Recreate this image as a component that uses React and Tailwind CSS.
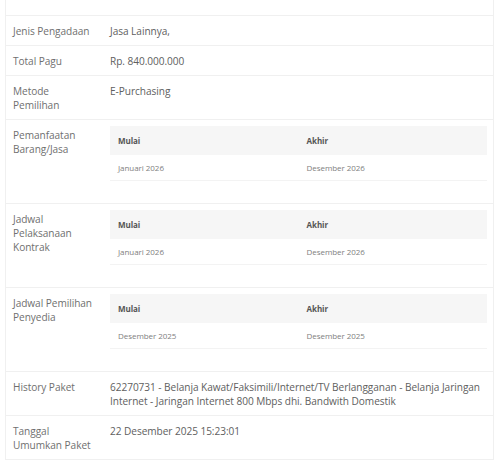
const jadwal = [
  {
    label: ["Pemanfaatan", "Barang/Jasa"],
    mulai: "Januari 2026",
    akhir: "Desember 2026",
  },
  {
    label: ["Jadwal", "Pelaksanaan", "Kontrak"],
    mulai: "Januari 2026",
    akhir: "Desember 2026",
  },
  {
    label: ["Jadwal Pemilihan", "Penyedia"],
    mulai: "Desember 2025",
    akhir: "Desember 2025",
  },
];

function Row({ label, children, valueClass = "pt-[8px] pb-[7px]" }) {
  return (
    <div className="flex border-t border-[#f0f0f0]">
      <div className="w-[96px] shrink-0 pl-[7px] pr-[4px] pt-[8px] pb-[7px] text-[#6f6f6f]">
        {label}
      </div>
      <div className={`flex-1 pl-[8px] pr-[2px] text-[#606060] ${valueClass}`}>{children}</div>
    </div>
  );
}

function JadwalTable({ mulai, akhir }) {
  return (
    <div className="mb-[22px] mr-[4px] text-[8px] leading-[12px]">
      <div className="grid grid-cols-2 bg-[#f6f6f6] h-[29px] items-center">
        <div className="pl-[8px] font-bold text-[#555]">Mulai</div>
        <div className="pl-[8px] font-bold text-[#555]">Akhir</div>
      </div>
      <div className="grid grid-cols-2 h-[26px] items-center border-b border-[#f3f3f3] text-[#808080]">
        <div className="pl-[8px]">{mulai}</div>
        <div className="pl-[8px]">{akhir}</div>
      </div>
    </div>
  );
}

export default function App() {
  return (
    <div
      className="w-[504px] h-[472px] bg-white overflow-hidden"
      style={{ fontFamily: '"Open Sans", "Liberation Sans", sans-serif' }}
    >
      <div className="mx-[5px] w-[489px] border-x border-b border-[#f0f0f0] text-[10.1px] leading-[14px] tracking-[-0.05px]">
        <div className="h-[15px]" />
        <Row label="Jenis Pengadaan">Jasa Lainnya,</Row>
        <Row label="Total Pagu">Rp. 840.000.000</Row>
        <Row label={<>Metode<br />Pemilihan</>}>E-Purchasing</Row>
        {jadwal.map((j) => (
          <Row
            key={j.label.join(" ")}
            valueClass="pt-[6px]"
            label={j.label.map((l, i) => (
              <div key={i}>{l}</div>
            ))}
          >
            <JadwalTable mulai={j.mulai} akhir={j.akhir} />
          </Row>
        ))}
        <Row label="History Paket">
          62270731 - Belanja Kawat/Faksimili/Internet/TV Berlangganan - Belanja Jaringan Internet - Jaringan Internet 800 Mbps dhi. Bandwith Domestik
        </Row>
        <Row label={<>Tanggal<br />Umumkan Paket</>} valueClass="pt-[8px] pb-[6px]">
          22 Desember 2025 15:23:01
        </Row>
      </div>
    </div>
  );
}
